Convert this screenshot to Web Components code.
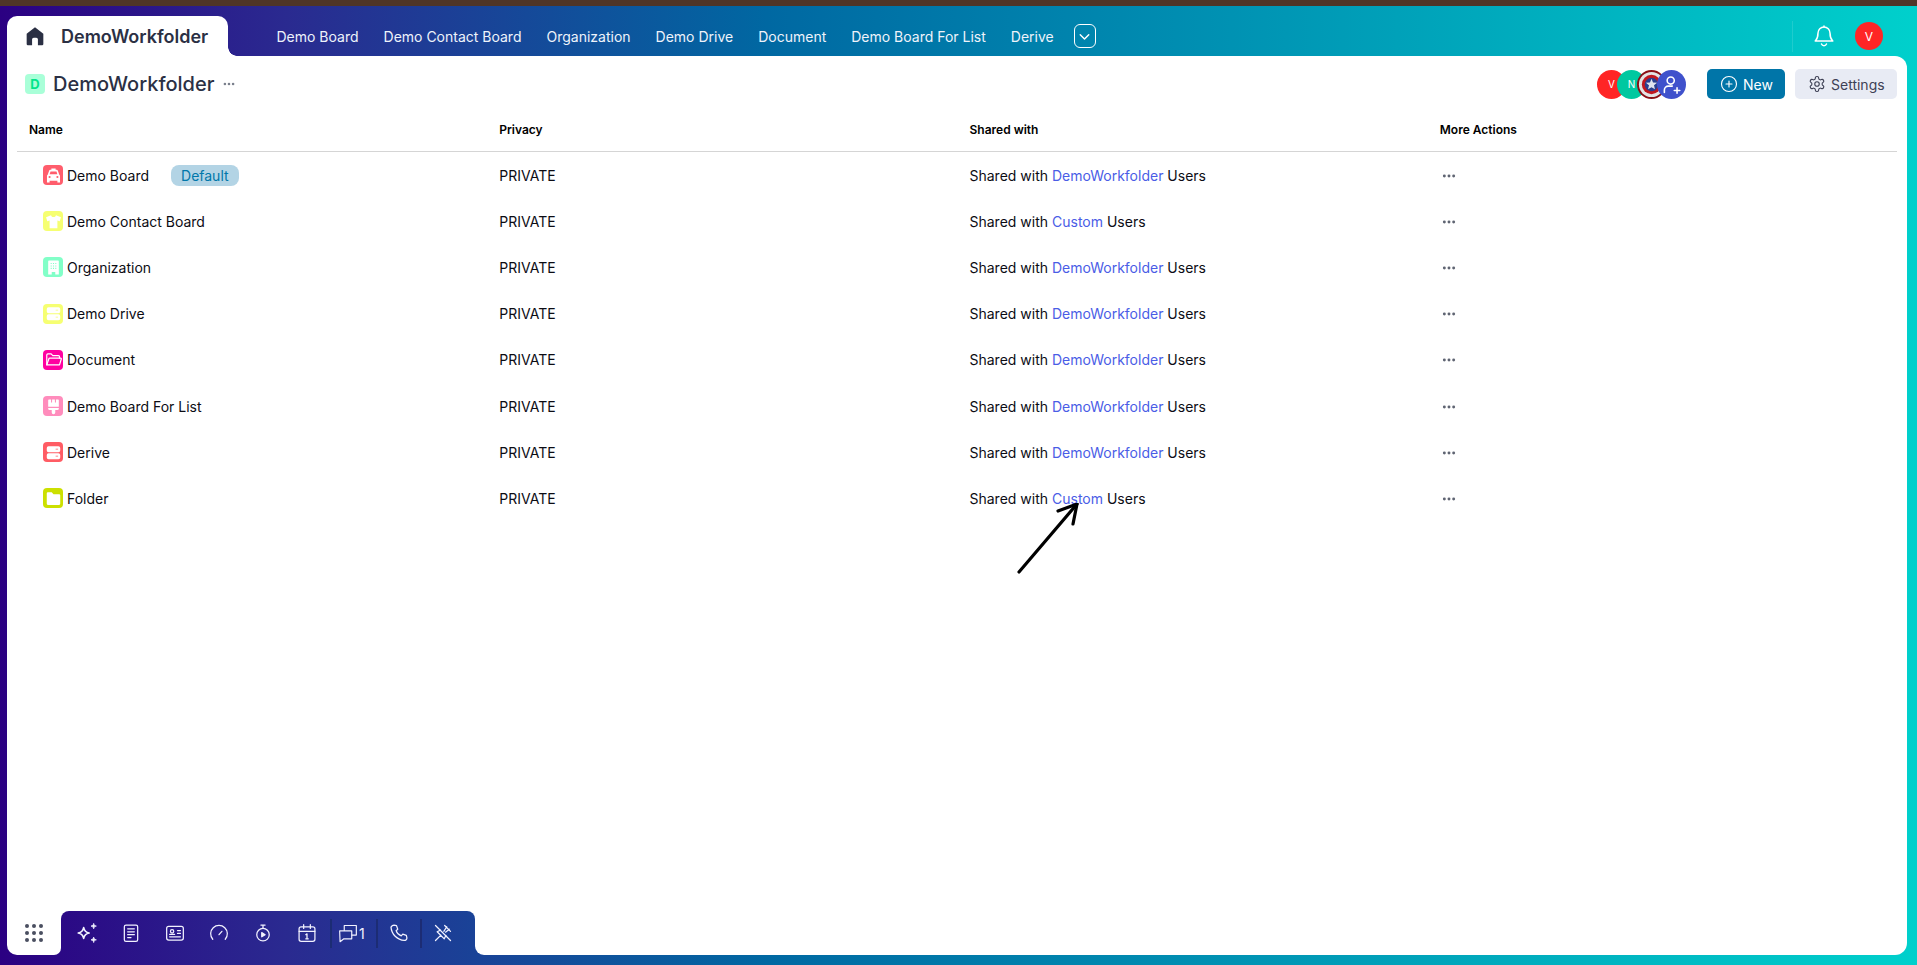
<!DOCTYPE html>
<html lang="en">
<head>
<meta charset="utf-8">
<title>DemoWorkfolder</title>
<style>
  html, body { height: 100%; }
  body {
    margin: 0;
    font-family: Inter, "Liberation Sans", sans-serif;
    overflow: hidden;
    background: #2b0080;
  }
</style>
</head>
<body>
<app-shell></app-shell>
<script>
const stroke = (body, w = 2) => `<svg viewBox="0 0 24 24" fill="none" stroke="currentColor" stroke-width="${w}" stroke-linecap="round" stroke-linejoin="round">${body}</svg>`
const fill = body => `<svg viewBox="0 0 24 24" fill="currentColor">${body}</svg>`

const ICONS = {
  home: fill('<path d="M12 1.500 22 9.200V21.500a1.500 1.500 0 0 1-1.500 1.500H15.500V16a2 2 0 0 0-2-2h-3a2 2 0 0 0-2 2v7H3.500A1.500 1.500 0 0 1 2 21.500V9.200z"/>'),
  chevron: stroke('<path d="m6 9.500 6 6 6-6"/>', 2),
  bell: stroke('<path d="M6 9a6 6 0 0 1 12 0c0 6 2.500 7.500 2.800 8H3.200C3.500 16.500 6 15 6 9z"/><path d="M9.500 20a2.700 2.700 0 0 0 5 0"/><path d="M12 3V2"/>', 1.5),
  plusCircle: stroke('<circle cx="12" cy="12" r="10"/><path d="M8 12h8M12 8v8"/>', 1.5),
  gear: stroke('<path d="M12.220 2h-.44a2 2 0 0 0-2 2v.18a2 2 0 0 1-1 1.730l-.43.25a2 2 0 0 1-2 0l-.15-.08a2 2 0 0 0-2.730.73l-.22.38a2 2 0 0 0 .73 2.730l.15.1a2 2 0 0 1 1 1.720v.51a2 2 0 0 1-1 1.740l-.15.09a2 2 0 0 0-.73 2.730l.22.38a2 2 0 0 0 2.730.73l.15-.08a2 2 0 0 1 2 0l.43.25a2 2 0 0 1 1 1.730V20a2 2 0 0 0 2 2h.44a2 2 0 0 0 2-2v-.18a2 2 0 0 1 1-1.730l.43-.25a2 2 0 0 1 2 0l.15.08a2 2 0 0 0 2.730-.73l.22-.39a2 2 0 0 0-.73-2.730l-.15-.08a2 2 0 0 1-1-1.740v-.5a2 2 0 0 1 1-1.740l.15-.09a2 2 0 0 0 .73-2.730l-.22-.38a2 2 0 0 0-2.730-.73l-.15.08a2 2 0 0 1-2 0l-.43-.25a2 2 0 0 1-1-1.730V4a2 2 0 0 0-2-2z"/><circle cx="12" cy="12" r="3"/>', 1.5),
  userPlus: stroke('<circle cx="11" cy="7" r="4.500"/><path d="M3 22v-3a5 5 0 0 1 5-5h5"/><path d="M15.500 19.500h7M19 16v7"/>', 2),
  dots: fill('<circle cx="5" cy="12" r="2.200"/><circle cx="12" cy="12" r="2.200"/><circle cx="19" cy="12" r="2.200"/>'),
  car: fill('<path fill-rule="evenodd" d="M9 2h6v2h1.500c.8 0 1.400.4 1.700 1.200L20 10.500c.8.500 1.200 1.200 1.200 2.200V22h-3.700v-2.500h-11V22H2.800v-9.300c0-1 .4-1.700 1.200-2.200l1.800-5.300C6.100 4.400 6.700 4 7.500 4H9zM7.800 6.200 6.500 10.300h11L16.200 6.200zM6.500 12.700a1.500 1.500 0 1 0 0 3 1.500 1.500 0 0 0 0-3zm11 0a1.500 1.500 0 1 0 0 3 1.500 1.500 0 0 0 0-3z"/>'),
  shirt: fill('<path d="M8.500 3c.5 1.800 1.800 2.700 3.500 2.700S15 4.800 15.500 3L22.500 6l-1.700 5.500-3.300-.9V21.500h-11V10.600l-3.300.9L1.500 6z"/>'),
  building: fill('<path fill-rule="evenodd" d="M5.500 2h13a1 1 0 0 1 1 1V22h-5v-3.500h-5V22h-5V3a1 1 0 0 1 1-1zM8 5.500V7h1.500V5.500zm3.200 0V7h1.600V5.500zm3.300 0V7H16V5.500zM8 9v1.500h1.500V9zm3.200 0v1.500h1.600V9zm3.300 0v1.500H16V9zM8 12.500V14h1.500v-1.500zm3.200 0V14h1.600v-1.500zm3.300 0V14H16v-1.500z"/>'),
  server: fill('<path fill-rule="evenodd" d="M5 3h14a2.500 2.500 0 0 1 2.500 2.500v3.500a2.500 2.500 0 0 1-2.500 2.500H5a2.500 2.500 0 0 1-2.500-2.500V5.500A2.500 2.500 0 0 1 5 3zM15 6.700v1h3.500v-1zM5 13h14a2.500 2.500 0 0 1 2.500 2.500V19a2.500 2.500 0 0 1-2.500 2.500H5A2.500 2.500 0 0 1 2.500 19v-3.500A2.500 2.500 0 0 1 5 13zm10 3.700v1h3.500v-1z"/>'),
  folderOpen: stroke('<path d="M2.500 19.500V5.500A1.500 1.500 0 0 1 4 4h4.700L11 6.500h8A1.500 1.500 0 0 1 20.500 8v2"/><path d="M2.500 19.500l3-8.500A1.200 1.200 0 0 1 6.700 10H22a1 1 0 0 1 1 1.300l-2.500 8.200z"/>', 1.7),
  brush: fill('<path d="M5.500 2h3v4.500h1.500V2h4v4.500h1.500V2h3a1 1 0 0 1 1 1V12.500H4.500V3a1 1 0 0 1 1-1zM4.500 14h15v1a2 2 0 0 1-2 2h-3v3.500a2.500 2.500 0 0 1-5 0V17h-3a2 2 0 0 1-2-2z"/>'),
  folder: fill('<path d="M4 3h5.500L12 6h8a1.500 1.500 0 0 1 1.500 1.500v12A1.500 1.500 0 0 1 20 21H4A1.500 1.500 0 0 1 2.500 19.500V4.500A1.500 1.500 0 0 1 4 3z"/>'),
  sparkles: '<svg viewBox="0 0 24 24"><path d="M8 5.500c.8 4.200 2.300 5.700 6.500 6.500-4.200.8-5.700 2.300-6.500 6.500-.8-4.200-2.300-5.700-6.500-6.500 4.200-.8 5.700-2.300 6.500-6.500z" fill="none" stroke="currentColor" stroke-width="2" stroke-linejoin="round"/><path d="M20 .5c.4 2 1.200 2.800 3.200 3.200-2 .4-2.800 1.200-3.200 3.200-.4-2-1.200-2.800-3.200-3.200 2-.4 2.800-1.200 3.200-3.200zM20 17c.4 2 1.200 2.800 3.200 3.200-2 .4-2.800 1.200-3.200 3.200-.4-2-1.200-2.800-3.200-3.200 2-.4 2.800-1.200 3.200-3.200z" fill="currentColor" stroke="currentColor"/></svg>',
  doc: stroke('<rect x="4" y="2.500" width="16" height="19.500" rx="2"/><path d="M8 7h8M8 10.500h8M8 14h8M8 17.500h4"/>', 1.5),
  idCard: stroke('<rect x="2" y="4" width="20" height="16.500" rx="2.500"/><circle cx="8.500" cy="10" r="2"/><path d="M5.500 16.500h13M15 9h3.500M15 12.500h3.500M5.500 13.500h6"/>', 1.5),
  gauge: stroke('<path d="M4.500 19.500a10 10 0 1 1 15 0"/><path d="m12 14 3.500-4"/>', 1.5),
  timer: stroke('<circle cx="12" cy="14" r="7.500"/><path d="M9.500 2.500h5M12 2.500v4"/><path d="M10.500 11.500v5l4-2.500z" fill="currentColor"/>', 1.5),
  calendar: stroke('<rect x="2.500" y="4.500" width="19" height="17.500" rx="2.500"/><path d="M2.500 10h19M8 2v4.500M16 2v4.500M10.500 14l1.500-1v6M10.500 19h3"/>', 1.5),
  chat: stroke('<path d="M2 9.500h14.500V19H7l-4.500 3.500z"/><path d="M7.500 9V3H22v11.500h-5.500"/>', 1.4),
  phone: stroke('<path d="M6 2.500 9 3.200l1.500 4.300-2 1.700c.9 2.800 3.400 5.300 6.200 6.200l1.800-2 4.300 1.500.7 3c0 1.600-1.400 3.100-3.100 3-8.500-.6-15.400-7.500-16-16C3 3.900 4.400 2.500 6 2.500z"/>', 1.5),
  pinOff: stroke('<path d="m3 3 18 18"/><path d="M14 3l7 7M16.500 4.500 13 10M19.500 7.500 15 11M9 8.500 5 10.500l8.500 8.500 2-4M9.500 14.500 3 21"/>', 1.5)
}

const shellTemplate = document.createElement('template')
shellTemplate.innerHTML = `
  <style>
    :host {
      --app-gradient: linear-gradient(90deg, #2b0082 0%, #2a2a90 15%, #0068a2 40%, #00d0cc 100%);
      display: flex;
      flex-direction: column;
      height: 100vh;
      background: var(--app-gradient) fixed;
      font-family: Inter, "Liberation Sans", sans-serif;
      overflow: hidden;
    }
    #strip { height: 6px; background: #4f3527; flex: none; }
    #panel {
      flex: 1;
      display: flex;
      flex-direction: column;
      min-height: 0;
      margin: 0 10px 10px 7px;
    }
  </style>
  <div id="strip"></div>
  <top-bar></top-bar>
  <div id="panel">
    <folder-page></folder-page>
    <dock-bar></dock-bar>
  </div>
`
customElements.define('app-shell',
  class extends HTMLElement {
    constructor () {
      super()
      this.attachShadow({ mode: 'open' })
        .appendChild(shellTemplate.content.cloneNode(true))
    }
  })

customElements.define('app-icon',
  class extends HTMLElement {
    constructor () {
      super()
      this.attachShadow({ mode: 'open' })
    }

    connectedCallback () {
      const size = this.getAttribute('size') || 20
      this.shadowRoot.innerHTML = `
        <style>
          :host { display: inline-flex; flex: none; width: ${size}px; height: ${size}px; }
          svg { width: 100%; height: 100%; display: block; }
        </style>
        ${ICONS[this.getAttribute('name')]}
      `
    }
  })

const topBarTemplate = document.createElement('template')
topBarTemplate.innerHTML = `
  <style>
    :host {
      display: flex;
      flex: none;
      height: 50px;
      box-sizing: border-box;
      padding: 10px 34px 0 7px;
      align-items: stretch;
    }
    #tab {
      position: relative;
      width: 221px;
      box-sizing: border-box;
      padding: 0 0 0 18px;
      display: flex;
      align-items: center;
      gap: 16px;
      background: #fff;
      border-radius: 10px 10px 0 0;
      color: #2b3044;
      font-size: 18px;
      font-weight: 600;
    }
    #tab::after {
      content: "";
      position: absolute;
      left: 100%;
      bottom: 0;
      width: 9px;
      height: 9px;
      background: radial-gradient(circle at 100% 0, transparent 8.500px, #fff 9px);
    }
    nav {
      display: flex;
      align-items: center;
      gap: 25px;
      margin-left: 48.500px;
      color: #eef3fb;
      font-size: 14px;
    }
    #more {
      width: 22px;
      height: 24px;
      box-sizing: border-box;
      margin-left: -5px;
      border: 1.500px solid #fff;
      border-radius: 6px;
      color: #fff;
      display: flex;
      align-items: center;
      justify-content: center;
    }
    #right {
      margin-left: auto;
      display: flex;
      align-items: center;
      color: #fff;
    }
    #rule { width: 1px; height: 31px; background: rgba(255, 255, 255, .12); margin-right: 19px; }
    #me {
      width: 28px;
      height: 28px;
      margin-left: 19px;
      border-radius: 50%;
      background: #ff2525;
      color: #fff;
      font-size: 12px;
      display: flex;
      align-items: center;
      justify-content: center;
    }
  </style>
  <div id="tab"><app-icon name="home" size="20"></app-icon><span>DemoWorkfolder</span></div>
  <nav>
    <span>Demo Board</span>
    <span>Demo Contact Board</span>
    <span>Organization</span>
    <span>Demo Drive</span>
    <span>Document</span>
    <span>Demo Board For List</span>
    <span>Derive</span>
    <div id="more"><app-icon name="chevron" size="17"></app-icon></div>
  </nav>
  <div id="right">
    <div id="rule"></div>
    <app-icon name="bell" size="24"></app-icon>
    <div id="me">V</div>
  </div>
`
customElements.define('top-bar',
  class extends HTMLElement {
    constructor () {
      super()
      this.attachShadow({ mode: 'open' })
        .appendChild(topBarTemplate.content.cloneNode(true))
    }
  })

const pageTemplate = document.createElement('template')
pageTemplate.innerHTML = `
  <style>
    :host {
      display: block;
      flex: 1;
      position: relative;
      min-height: 0;
      box-sizing: border-box;
      padding: 13px 10px 0 10px;
      background: #fff;
      border-radius: 0 12px 0 0;
    }
    #head {
      display: flex;
      align-items: center;
      height: 30px;
      padding: 0 0 0 8px;
    }
    #badge {
      width: 20px;
      height: 20px;
      border-radius: 4px;
      background: #a9ffd8;
      color: #00e58a;
      font-size: 13px;
      font-weight: 700;
      display: flex;
      align-items: center;
      justify-content: center;
    }
    h1 {
      margin: 0 8px;
      color: #2b3044;
      font-size: 20px;
      font-weight: 500;
    }
    #title-more { color: #7a7f8c; }
    #people { margin-left: auto; display: flex; margin-right: 21px; }
    .face {
      width: 29px;
      height: 29px;
      margin-left: -9px;
      border-radius: 50%;
      color: #fff;
      font-size: 10px;
      display: flex;
      align-items: center;
      justify-content: center;
    }
    .face svg { display: block; width: 100%; height: 100%; }
    .btn {
      height: 30px;
      box-sizing: border-box;
      border-radius: 5px;
      font-size: 14px;
      display: flex;
      align-items: center;
      gap: 5px;
    }
    #new { width: 78px; padding-left: 13px; background: #0075a8; color: #fff; }
    #settings { width: 102px; padding-left: 13px; margin-left: 10px; background: #e8ebf4; color: #3e4155; }
    #cols { display: grid; grid-template-columns: repeat(4, 470.250px); }
    #cols {
      height: 53px;
      box-sizing: border-box;
      padding-top: 9px;
      align-items: center;
      border-bottom: 1px solid #d5d5d5;
      font-size: 12px;
      font-weight: 600;
      color: #000;
    }
    #cols span { padding-left: 12px; }
    #arrow {
      position: absolute;
      left: 1005px;
      top: 447px;
      width: 70px;
      height: 74px;
    }
  </style>
  <div id="head">
    <div id="badge">D</div>
    <h1>DemoWorkfolder</h1>
    <app-icon id="title-more" name="dots" size="14"></app-icon>
    <div id="people">
      <div class="face" style="background:#ff2525">V</div>
      <div class="face" style="background:#00c8a0">N</div>
      <div class="face">
        <svg viewBox="0 0 30 30">
          <circle cx="15" cy="15" r="15" fill="#8a0f14"/>
          <circle cx="15" cy="15" r="13" fill="#e4e4e4"/>
          <circle cx="15" cy="15" r="10" fill="#c01820"/>
          <circle cx="15" cy="15" r="7" fill="#2a3f8f"/>
          <path d="m15 9 1.600 3.900 4.200.3-3.200 2.700 1 4.100-3.600-2.200-3.600 2.200 1-4.100-3.200-2.700 4.200-.3z" fill="#dfe3ee"/>
        </svg>
      </div>
      <div class="face" style="background:#3f51cc"><app-icon name="userPlus" size="19"></app-icon></div>
    </div>
    <div class="btn" id="new"><app-icon name="plusCircle" size="18"></app-icon><span>New</span></div>
    <div class="btn" id="settings"><app-icon name="gear" size="18"></app-icon><span>Settings</span></div>
  </div>
  <div id="cols">
    <span>Name</span><span>Privacy</span><span>Shared with</span><span>More Actions</span>
  </div>
  <div id="rows">
    <board-row name="Demo Board" icon="car" color="#ff5d6c" group="DemoWorkfolder" default></board-row>
    <board-row name="Demo Contact Board" icon="shirt" color="#f6ff72" group="Custom"></board-row>
    <board-row name="Organization" icon="building" color="#82ffc8" group="DemoWorkfolder"></board-row>
    <board-row name="Demo Drive" icon="server" color="#f6ff72" group="DemoWorkfolder"></board-row>
    <board-row name="Document" icon="folderOpen" color="#ff00a0" group="DemoWorkfolder"></board-row>
    <board-row name="Demo Board For List" icon="brush" color="#ff8cbc" group="DemoWorkfolder"></board-row>
    <board-row name="Derive" icon="server" color="#ff5c64" group="DemoWorkfolder"></board-row>
    <board-row name="Folder" icon="folder" color="#cce000" group="Custom"></board-row>
  </div>
  <svg id="arrow" viewBox="0 0 70 74" fill="none" stroke="#000" stroke-width="3.200" stroke-linecap="round" stroke-linejoin="round">
    <path d="M7 69 65 1"/>
    <path d="M46 8 65 1 61 21"/>
  </svg>
`
customElements.define('folder-page',
  class extends HTMLElement {
    constructor () {
      super()
      this.attachShadow({ mode: 'open' })
        .appendChild(pageTemplate.content.cloneNode(true))
    }
  })

customElements.define('board-row',
  class extends HTMLElement {
    constructor () {
      super()
      this.attachShadow({ mode: 'open' })
    }

    connectedCallback () {
      const tag = this.hasAttribute('default') ? '<span id="tag">Default</span>' : ''
      this.shadowRoot.innerHTML = `
        <style>
          :host {
            display: grid;
            grid-template-columns: repeat(4, 470.250px);
            height: 46.200px;
            align-items: center;
            font-size: 14px;
            color: #0c0c14;
          }
          .cell { padding-left: 12px; }
          #name { padding-left: 26px; display: flex; align-items: center; }
          #tile {
            width: 20px;
            height: 20px;
            margin-right: 4px;
            border-radius: 4px;
            display: flex;
            align-items: center;
            justify-content: center;
            color: #fff;
            background: ${this.getAttribute('color')};
          }
          #tag {
            margin-left: 22px;
            padding: 2px 10px;
            border-radius: 8px;
            background: #b3d4e5;
            color: #0077aa;
          }
          a { color: #4a5de6; text-decoration: none; }
          #dots { color: #5f6472; display: flex; margin: 1px 0 0 1px; }
        </style>
        <div id="name" class="cell">
          <div id="tile"><app-icon name="${this.getAttribute('icon')}" size="17"></app-icon></div>
          <span>${this.getAttribute('name')}</span>
          ${tag}
        </div>
        <div class="cell">PRIVATE</div>
        <div class="cell">Shared with <a>${this.getAttribute('group')}</a> Users</div>
        <div class="cell"><div id="dots"><app-icon name="dots" size="16"></app-icon></div></div>
      `
    }
  })

const dockTemplate = document.createElement('template')
dockTemplate.innerHTML = `
  <style>
    :host { display: flex; flex: none; height: 44px; }
    #apps {
      width: 54px;
      background: #fff;
      border-radius: 0 0 7px 10px;
      display: grid;
      grid-template-columns: repeat(3, 4px);
      grid-template-rows: repeat(3, 4px);
      gap: 3px;
      align-content: center;
      justify-content: center;
    }
    #apps i { background: #4a4f60; border-radius: 50%; }
    #tools-wrap { background: #fff; width: 414px; flex: none; }
    #tools {
      height: 44px;
      box-sizing: border-box;
      padding-left: 16px;
      display: flex;
      align-items: center;
      border-radius: 8px 8px 0 0;
      background: var(--app-gradient) fixed;
      color: #f2f2ff;
    }
    #group { display: flex; gap: 24px; }
    .sep { width: 2px; height: 29px; background: #1c2c74; flex: none; margin: 0 11px; }
    #first { margin: 0 6px 0 13px; }
    #second { margin-left: 8px; }
    #count { display: flex; align-items: center; gap: 1px; font-size: 14px; width: 30px; }
    #rest { flex: 1; background: #fff; border-radius: 0 0 12px 9px; }
  </style>
  <div id="apps"><i></i><i></i><i></i><i></i><i></i><i></i><i></i><i></i><i></i></div>
  <div id="tools-wrap">
    <div id="tools">
      <div id="group">
        <app-icon name="sparkles" size="20"></app-icon>
        <app-icon name="doc" size="20"></app-icon>
        <app-icon name="idCard" size="20"></app-icon>
        <app-icon name="gauge" size="20"></app-icon>
        <app-icon name="timer" size="20"></app-icon>
        <app-icon name="calendar" size="20"></app-icon>
      </div>
      <div class="sep" id="first"></div>
      <div id="count"><app-icon name="chat" size="20"></app-icon><span>1</span></div>
      <div class="sep" id="second"></div>
      <app-icon name="phone" size="20"></app-icon>
      <div class="sep"></div>
      <app-icon name="pinOff" size="20"></app-icon>
    </div>
  </div>
  <div id="rest"></div>
`
customElements.define('dock-bar',
  class extends HTMLElement {
    constructor () {
      super()
      this.attachShadow({ mode: 'open' })
        .appendChild(dockTemplate.content.cloneNode(true))
    }
  })
</script>
</body>
</html>
